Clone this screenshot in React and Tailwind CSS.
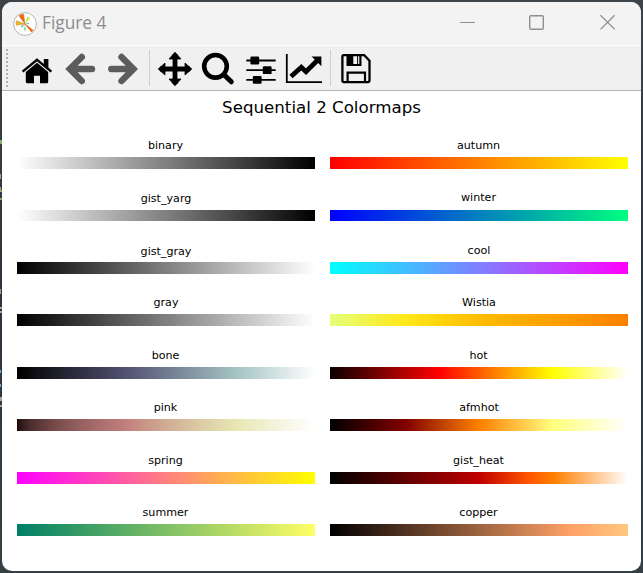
import React from "react";

const lerp = (pts, x) => {
  for (let i = 1; i < pts.length; i++) {
    const [x0, y0] = pts[i - 1];
    const [x1, y1] = pts[i];
    if (x <= x1) return y0 + ((y1 - y0) * (x - x0)) / (x1 - x0);
  }
  return pts[pts.length - 1][1];
};

const hot = (x) => [
  lerp([[0, 0.0416], [0.365079, 1], [1, 1]], x),
  lerp([[0, 0], [0.365079, 0], [0.746032, 1], [1, 1]], x),
  lerp([[0, 0], [0.746032, 0], [1, 1]], x),
];

const gray = (x) => [x, x, x];
const inverted = (x) => [1 - x, 1 - x, 1 - x];

const maps = {
  binary: inverted,
  gist_yarg: inverted,
  gist_gray: gray,
  gray,
  bone: (x) => [
    lerp([[0, 0], [0.746032, 0.652778], [1, 1]], x),
    lerp([[0, 0], [0.365079, 0.319444], [0.746032, 0.777778], [1, 1]], x),
    lerp([[0, 0], [0.365079, 0.444444], [1, 1]], x),
  ],
  pink: (x) => hot(x).map((c) => Math.sqrt((2 * x + c) / 3)),
  spring: (x) => [1, x, 1 - x],
  summer: (x) => [x, 0.5 + 0.5 * x, 0.4],
  autumn: (x) => [1, x, 0],
  winter: (x) => [0, x, 1 - 0.5 * x],
  cool: (x) => [x, 1 - x, 1],
  Wistia: (x) => [
    lerp([[0, 0.894], [0.25, 1], [0.75, 1], [1, 0.988]], x),
    lerp([[0, 1], [0.25, 0.91], [0.5, 0.741], [0.75, 0.627], [1, 0.498]], x),
    lerp([[0, 0.478], [0.25, 0.102], [0.5, 0], [1, 0]], x),
  ],
  hot,
  afmhot: (x) => [2 * x, 2 * x - 0.5, 2 * x - 1],
  gist_heat: (x) => [1.5 * x, 2 * x - 1, 4 * x - 3],
  copper: (x) => [Math.min(1, x / 0.809524), 0.7812 * x, 0.4975 * x],
};

const gradient = (fn) => {
  const n = 128;
  const stops = [];
  for (let i = 0; i <= n; i++) {
    const rgb = fn(i / n).map((c) => Math.round(255 * Math.max(0, Math.min(1, c))));
    stops.push(`rgb(${rgb.join(",")}) ${((i / n) * 100).toFixed(2)}%`);
  }
  return `linear-gradient(to right, ${stops.join(",")})`;
};

const rows = [
  ["binary", "autumn", "h-[53px]", "h-3"],
  ["gist_yarg", "winter", "h-[52px]", "h-[11px]"],
  ["gist_gray", "cool", "h-[52px]", "h-3"],
  ["gray", "Wistia", "h-[53px]", "h-3"],
  ["bone", "hot", "h-[52px]", "h-3"],
  ["pink", "afmhot", "h-[53px]", "h-3"],
  ["spring", "gist_heat", "h-[52px]", "h-3"],
  ["summer", "copper", "h-[52px]", "h-3"],
];

const labelStyles = {
  gist_yarg: "leading-[14px]",
  gist_gray: "leading-[16px]",
  gray: "leading-[14px]",
  winter: "leading-[12px] pr-px",
  cool: "leading-[14px]",
  Wistia: "leading-[14px]",
  afmhot: "leading-[14px]",
};

function Colormap({ name, bar }) {
  return (
    <div className="w-[298px] shrink-0">
      <div className={`h-[18px] text-center text-[11.11px] text-black ${labelStyles[name] || "leading-[14px] pr-px"}`}>
        {name}
      </div>
      <div className={bar} style={{ background: gradient(maps[name]) }} />
    </div>
  );
}

function TitleBar() {
  return (
    <div className="flex h-[43px] shrink-0 items-center bg-[#f3f3f3] pl-[11px]">
      <svg className="h-6 w-6 shrink-0" viewBox="13 10 24 24">
        <circle cx="25" cy="22" r="11.4" fill="#fff" stroke="#b4b4b4" strokeWidth="1" />
        <path d="M25 22 18.8 13.7 Q21 12.2 23.5 12Z" fill="#f8660e" stroke="#b75a20" strokeWidth=".4" />
        <path d="M25 22 16.3 23.3Q15.8 20.8 16.5 18.7Z" fill="#f6b51a" stroke="#a87b20" strokeWidth=".4" />
        <path d="M25 22 27.5 14.5 30 16.2Z" fill="#b4f334" />
        <path d="M25 22 33 28.2 31.5 30Z" fill="#f8660e" stroke="#e65a0e" strokeWidth=".7" />
        <path d="M25 22 26 28.6 23.8 28.3Z" fill="#6aef83" />
        <path d="M25 22 21 24.3 21.8 25.2ZM25 22 28.8 21 28.8 22Z" fill="#348bb0" />
      </svg>
      <span className="mb-0.5 ml-[5px] w-[80px] whitespace-nowrap font-['Open_Sans',sans-serif] text-[17.3px] leading-6 text-[#8d8d8d]">
        Figure 4
      </span>
      <svg className="ml-auto h-[43px] w-[184px]" viewBox="457 2 184 43" fill="none" stroke="#8f8f8f">
        <path d="M460 22.5h15" />
        <rect x="529.7" y="15.7" width="13.6" height="13.6" rx="1.2" strokeWidth="1.4" />
        <path d="M600.5 15.2l14.2 14.2M614.7 15.2l-14.2 14.2" strokeWidth="1.3" />
      </svg>
    </div>
  );
}

function Toolbar() {
  return (
    <div className="flex h-[46px] shrink-0 border-b border-t border-b-[#b4b4b4] border-t-white bg-[#f0f0f0]">
      <svg className="h-11 w-[13px]" viewBox="2 46 13 44">
        <path d="M7 49v38" stroke="#b0b0b0" strokeWidth="2" strokeDasharray="2 2" />
      </svg>
      <svg className="h-11 w-[43px]" viewBox="15 46 43 44">
        <path d="M22.6 71.6 37 59.8 51.4 71.6" fill="none" stroke="#000" strokeWidth="2.4" />
        <path d="M43.8 59h4.6v10.2l-4.6-3.8Z" />
        <path d="M37 62.8 48.2 72v9.8q0 1.5-1.5 1.5H40v-7.6h-6v7.6h-6.7q-1.5 0-1.5-1.5V72Z" />
      </svg>
      <svg className="h-11 w-[43px]" viewBox="58 46 43 44">
        <path d="M81.8 57 69.8 69 81.8 81M71 69H92" fill="none" stroke="#5c5c5c" strokeWidth="6.4" strokeLinecap="round" />
      </svg>
      <svg className="h-11 w-[43px]" viewBox="101 46 43 44">
        <path d="M121.5 57 133.5 69 121.5 81M132.3 69H111.3" fill="none" stroke="#5c5c5c" strokeWidth="6.4" strokeLinecap="round" />
      </svg>
      <div className="mx-[5px] my-1 w-px bg-[#d0d0d0]" />
      <svg className="h-11 w-[42px]" viewBox="155 46 42 44">
        <path d="M175 54V84M160 69H190" stroke="#000" strokeWidth="4.8" />
        <path d="M175 52.2l6 6.8h-12ZM175 85.8l6-6.8h-12ZM158.2 69l6.8-6v12ZM191.8 69l-6.8-6v12Z" stroke="#000" strokeWidth=".8" strokeLinejoin="round" />
      </svg>
      <svg className="h-11 w-[43px]" viewBox="197 46 43 44" fill="none" stroke="#000">
        <circle cx="215.5" cy="66.3" r="11.3" strokeWidth="4.6" />
        <path d="M223.8 74.5 231.3 81.8" strokeWidth="5" strokeLinecap="round" />
      </svg>
      <svg className="h-11 w-[43px]" viewBox="240 46 43 44">
        <path d="M246.3 60.5H275.7M246.3 70.2H275.7M246.3 79.8H275.7" stroke="#000" strokeWidth="1.8" />
        <rect x="250.4" y="56.6" width="8.8" height="7.8" rx="1.2" />
        <rect x="262.8" y="66.3" width="8.8" height="7.8" rx="1.2" />
        <rect x="252.8" y="75.9" width="8.8" height="7.8" rx="1.2" />
      </svg>
      <svg className="h-11 w-[42px]" viewBox="283 46 42 44">
        <path d="M286.8 54V82.2H322" fill="none" stroke="#000" strokeWidth="1.8" />
        <path d="M291 76.5 301.3 67.2 306 71.7 318 59.7" fill="none" stroke="#000" strokeWidth="4.8" />
        <path d="M311.6 56.6 321.4 56.6 321.4 66.2Z" />
      </svg>
      <div className="mx-[5px] my-1 w-px bg-[#d0d0d0]" />
      <svg className="h-11 w-[42px]" viewBox="336 46 42 44" fill="none" stroke="#000" strokeWidth="2.3">
        <path d="M343.8 55.1H364.2L369.5 60.6V80.3Q369.5 82.1 367.8 82.1H344Q342.4 82.1 342.4 80.5V56.7Q342.4 55.1 343.8 55.1Z" />
        <path d="M347.6 55V65H360.4V55M347.6 82V72.6H365V82" strokeWidth="2.2" />
        <path d="M347 55H353.3V65H347Z" fill="#000" stroke="none" />
        <path d="M357.6 56V64.8" strokeWidth="1" />
      </svg>
    </div>
  );
}

function EdgeSpecks() {
  return (
    <svg className="absolute left-0 top-0 h-[573px] w-0.5" viewBox="0 0 2 573">
      <path d="M0 140h2v4h-2ZM0 190h2v2h-2ZM0 198h2v2h-2Z" fill="#86ad72" />
      <path d="M0 174h1v5h-1ZM0 187h1v3h-1ZM0 289h1v5h-1Z" fill="#b39c78" />
      <path d="M0 307h2v2h-2ZM0 311h2v2h-2ZM0 397h2v4h-2ZM0 405h2v2h-2Z" fill="#a0a4a8" />
      <path d="M0 370h1v3h-1ZM0 384h1v3h-1Z" fill="#83a8bd" />
    </svg>
  );
}

export default function App() {
  return (
    <div className="relative h-[573px] w-[643px] overflow-hidden bg-gradient-to-b from-[#3e4347] via-[#2c343d] to-[#354047] p-0.5 font-['DejaVu_Sans',sans-serif]">
      <EdgeSpecks />
      <div className="flex h-[569px] w-[639px] flex-col overflow-hidden rounded-[10px] bg-white">
        <TitleBar />
        <Toolbar />
        <div className="pl-[15px] pr-[13px]">
          <h1 className="mt-[7px] h-[41px] w-[609px] whitespace-nowrap text-center text-[16.67px] leading-5 text-black">
            Sequential 2 Colormaps
          </h1>
          {rows.map(([left, right, height, bar]) => (
            <div key={left} className={`flex gap-[15px] ${height}`}>
              <Colormap name={left} bar={bar} />
              <Colormap name={right} bar={bar} />
            </div>
          ))}
        </div>
      </div>
    </div>
  );
}
